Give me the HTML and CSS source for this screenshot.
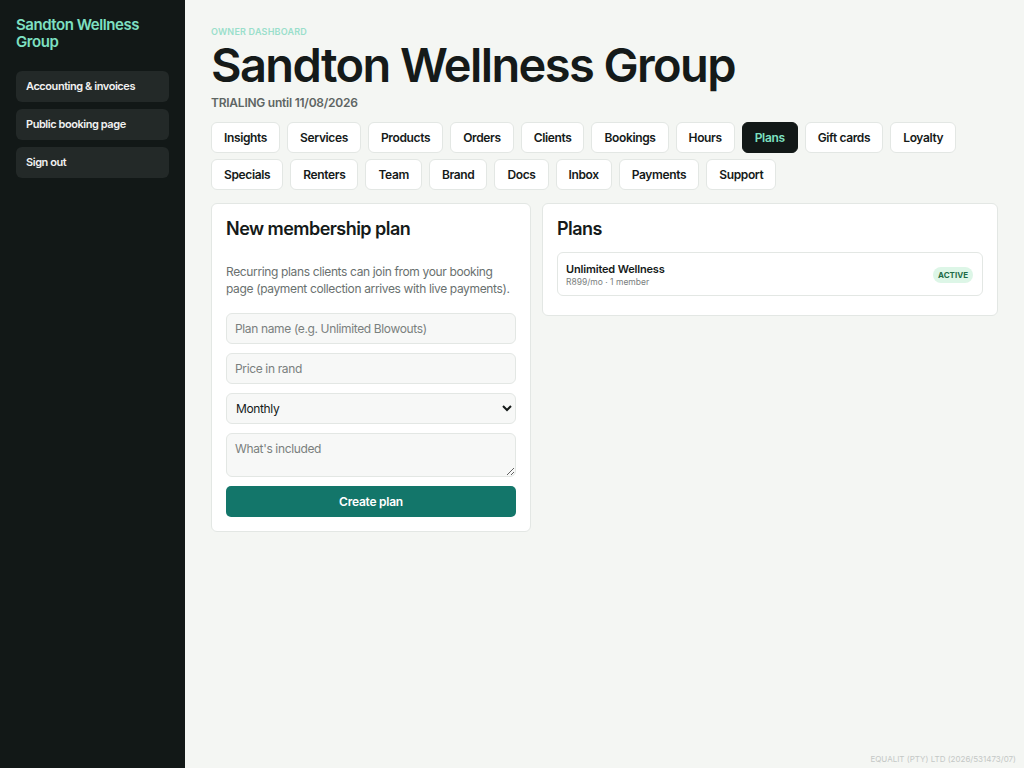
FILE: index.html
```html
<!DOCTYPE html>
<html lang="en">
<head>
    <meta charset="UTF-8">
    <meta name="viewport" content="width=device-width, initial-scale=1.0">
    <title>Plans - Sandton Wellness Group</title>
    <link rel="stylesheet" href="styles.css">
</head>
<body>
    <aside class="sidebar">
        <div class="brand">Sandton Wellness Group</div>
        <a class="side-link" href="#">Accounting &amp; invoices</a>
        <a class="side-link" href="#">Public booking page</a>
        <a class="side-link" href="#">Sign out</a>
    </aside>

    <main class="main">
        <div class="eyebrow">OWNER DASHBOARD</div>
        <h1>Sandton Wellness Group</h1>
        <div class="status">TRIALING until 11/08/2026</div>

        <nav class="tabs">
            <a class="tab" href="#">Insights</a>
            <a class="tab" href="#">Services</a>
            <a class="tab" href="#">Products</a>
            <a class="tab" href="#">Orders</a>
            <a class="tab" href="#">Clients</a>
            <a class="tab" href="#">Bookings</a>
            <a class="tab" href="#">Hours</a>
            <a class="tab active" href="#">Plans</a>
            <a class="tab" href="#">Gift cards</a>
            <a class="tab" href="#">Loyalty</a>
            <a class="tab" href="#">Specials</a>
            <a class="tab" href="#">Renters</a>
            <a class="tab" href="#">Team</a>
            <a class="tab" href="#">Brand</a>
            <a class="tab" href="#">Docs</a>
            <a class="tab" href="#">Inbox</a>
            <a class="tab" href="#">Payments</a>
            <a class="tab" href="#">Support</a>
        </nav>

        <div class="grid">
            <section class="card form-card">
                <h2>New membership plan</h2>
                <p class="hint">Recurring plans clients can join from your booking page (payment collection arrives with live payments).</p>
                <input class="field" type="text" placeholder="Plan name (e.g. Unlimited Blowouts)">
                <input class="field" type="text" placeholder="Price in rand">
                <select class="field">
                    <option>Monthly</option>
                    <option>Weekly</option>
                    <option>Yearly</option>
                </select>
                <textarea class="field area" placeholder="What's included"></textarea>
                <button class="primary">Create plan</button>
            </section>

            <section class="card list-card">
                <h2>Plans</h2>
                <div class="plan">
                    <div>
                        <div class="plan-name">Unlimited Wellness</div>
                        <div class="plan-meta">R899/mo · 1 member</div>
                    </div>
                    <span class="badge">ACTIVE</span>
                </div>
            </section>
        </div>

        <footer class="footer">EQUALIT (PTY) LTD (2026/531473/07)</footer>
    </main>
</body>
</html>
```

FILE: styles.css
```css
* {
    box-sizing: border-box;
}
body {
    font-family: 'Inter', 'Liberation Sans', sans-serif;
    background-color: #F4F6F3;
    color: #151A19;
    display: flex;
    min-height: 100vh;
    margin: 0;
}
.sidebar {
    width: 185px;
    flex-shrink: 0;
    background-color: #121817;
    padding: 16px 16px;
    display: flex;
    flex-direction: column;
    gap: 7px;
}
.brand {
    color: #7EE0C2;
    font-size: 15px;
    font-weight: 600;
    line-height: 17px;
    letter-spacing: -0.03em;
    margin-bottom: 14px;
}
.side-link {
    display: block;
    background-color: #232928;
    color: #F1F1F1;
    font-size: 11px;
    font-weight: 600;
    letter-spacing: -0.04em;
    text-decoration: none;
    padding: 9px 10px;
    height: 31px;
    line-height: 13px;
    border-radius: 6px;
}
.main {
    flex: 1;
    display: flex;
    flex-direction: column;
    padding: 26px 26px 4px 26px;
}
.eyebrow {
    color: #9ADFCB;
    font-size: 9px;
    font-weight: 600;
    letter-spacing: 0.2px;
}
h1 {
    font-size: 47px;
    font-weight: 600;
    letter-spacing: -1.6px;
    margin: 1px 0 0;
    line-height: 54px;
}
.status {
    color: #5E6563;
    font-size: 12px;
    font-weight: 600;
    letter-spacing: -0.02em;
    margin: 3px 0 12px;
}
.tabs {
    display: flex;
    flex-wrap: wrap;
    gap: 6px 7px;
    margin-bottom: 13px;
}
.tab {
    display: block;
    height: 31px;
    padding: 0 12px;
    line-height: 29px;
    font-size: 12px;
    font-weight: 600;
    letter-spacing: -0.03em;
    color: #151A19;
    text-decoration: none;
    background-color: #FFFFFF;
    border: 1px solid #E3E7E4;
    border-radius: 6px;
}
.tab.active {
    background-color: #121817;
    border-color: #121817;
    color: #7EE0C2;
}
.grid {
    display: grid;
    grid-template-columns: 320px 1fr;
    gap: 11px;
    align-items: start;
}
.card {
    background-color: #FFFFFF;
    border: 1px solid #E3E7E4;
    border-radius: 6px;
    padding: 14px;
}
.form-card {
    display: flex;
    flex-direction: column;
    gap: 9px;
}
.list-card {
    padding-bottom: 19px;
}
.list-card h2 {
    margin-bottom: 12px;
}
h2 {
    font-size: 18px;
    font-weight: 600;
    letter-spacing: -0.03em;
    margin: 0 0 10px;
    line-height: 22px;
}
.hint {
    color: #6A716F;
    font-size: 12px;
    letter-spacing: -0.03em;
    line-height: 17px;
    margin: 4px 0 7px;
}
.field {
    width: 100%;
    height: 31px;
    padding: 0 8px;
    font-family: inherit;
    font-size: 12px;
    letter-spacing: -0.03em;
    color: #151A19;
    background-color: #F7F8F7;
    border: 1px solid #E3E7E4;
    border-radius: 6px;
}
.field::placeholder {
    color: #7A807E;
}
select.field {
    padding: 0 5px;
}
.area {
    height: 44px;
    padding: 7px 8px;
    resize: vertical;
}
.primary {
    height: 31px;
    border: none;
    border-radius: 5px;
    background-color: #13766A;
    color: #FFFFFF;
    font-family: inherit;
    font-size: 12px;
    font-weight: 600;
    letter-spacing: -0.02em;
    cursor: pointer;
}
.plan {
    display: flex;
    align-items: center;
    justify-content: space-between;
    border: 1px solid #E3E7E4;
    border-radius: 6px;
    padding: 9px 9px 8px 8px;
}
.plan-name {
    font-size: 11px;
    font-weight: 600;
    letter-spacing: -0.015em;
}
.plan-meta {
    color: #7A807E;
    font-size: 8.5px;
    margin-top: 1px;
}
.badge {
    background-color: #DDF6E7;
    color: #1E6B46;
    font-size: 8px;
    font-weight: 700;
    padding: 3px 5px;
    border-radius: 8px;
}
.footer {
    margin-top: auto;
    text-align: right;
    color: #C4C8C6;
    font-size: 8px;
    margin-right: -18px;
}
```
